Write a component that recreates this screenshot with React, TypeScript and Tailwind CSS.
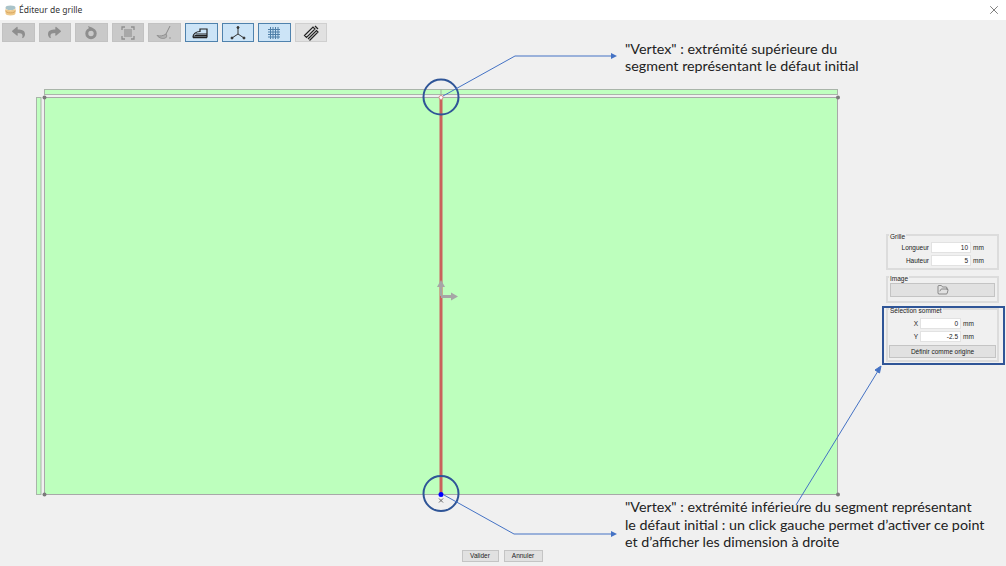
import React from "react";
import { X, FolderOpen } from "lucide-react";
import { FaReply, FaShare } from "react-icons/fa";

const uiFont = "font-['Liberation_Sans',sans-serif]";
const noteFont = "font-['Lato',sans-serif]";

const ToolButton = ({ active, disabled, children }: { active?: boolean; disabled?: boolean; children: React.ReactNode }) => {
  let look = "bg-[#e1e1e1] border-[#cfcfcf]";
  if (disabled) look = "bg-[#c9c9c9] border-[#c2c2c2]";
  if (active) look = "bg-[#cce4f7] border-[#4f82ad]";
  return <div className={`w-[32.6px] h-[19px] border flex items-center justify-center ${look}`}>{children}</div>;
};

const Field = ({ label, value, labelWidth, inputWidth }: { label: string; value: string; labelWidth: string; inputWidth: string }) => (
  <div className="flex items-center h-[11px]">
    <span className={`${labelWidth} text-right pr-[2px]`}>{label}</span>
    <div className={`${inputWidth} h-[11px] bg-white border border-[#e2e2e2] text-right pr-[2px] leading-[9px]`}>{value}</div>
    <span className="ml-[2px]">mm</span>
  </div>
);

const Group = ({ title, className, children }: { title: string; className: string; children: React.ReactNode }) => (
  <div className={`relative border-2 border-[#dcdcdc] ${className}`}>
    <span className="absolute left-[1px] top-[-4px] bg-[#f0f0f0] px-[1px] leading-[9px]">{title}</span>
    {children}
  </div>
);

const Canvas = () => (
  <svg className="w-[886px] h-[508px] block" viewBox="0 42 886 508">
    <rect x="44.5" y="89.5" width="793" height="5" fill="#bfffbf" stroke="#a9b5a9" />
    <rect x="36.5" y="97.5" width="4.5" height="397" fill="#bfffbf" stroke="#a9b5a9" />
    <rect x="44.5" y="97.5" width="793" height="397" fill="#bdffbd" stroke="#a8a8a8" />
    <line x1="441" y1="89" x2="441" y2="97" stroke="#9fb09f" />
    <line x1="441" y1="97" x2="441" y2="494" stroke="#c9625c" strokeWidth="3" />
    <g fill="#a6a6a6">
      <rect x="440" y="286" width="2" height="10" />
      <polygon points="441,280 437,287 445,287" />
      <rect x="441" y="295" width="11" height="3" />
      <polygon points="458,296.5 451,292.5 451,300.5" />
    </g>
    <g fill="#7a7a7a">
      <circle cx="44.5" cy="97.5" r="2" />
      <circle cx="838" cy="97.5" r="2" />
      <circle cx="44.5" cy="494.5" r="2" />
      <circle cx="838" cy="494.5" r="2" />
    </g>
    <circle cx="441" cy="97.5" r="2" fill="#fff" stroke="#d58f8f" />
    <circle cx="441" cy="494.5" r="2.5" fill="#0000ff" />
    <path d="M439 498.5l4 4M443 498.5l-4 4" stroke="#666" fill="none" />
  </svg>
);

export default function App() {
  return (
    <div className={`relative w-[1006px] h-[566px] overflow-hidden bg-[#f0f0f0] flex flex-col text-[6.5px] text-[#222] ${uiFont}`}>
      {/* Title bar */}
      <div className="h-[20px] bg-white flex items-center pl-[5px] pr-[5px] shrink-0">
        <svg width="11" height="11" viewBox="0 0 11 11">
          <ellipse cx="5.5" cy="2.8" rx="5" ry="2.3" fill="#a9c3c9" />
          <path d="M.5 3v5.2c0 1.3 2.2 2.3 5 2.3s5-1 5-2.3V3c0 1.3-2.2 2.3-5 2.3S.5 4.3.5 3z" fill="#efc98a" />
          <path d="M.5 5.6c0 1.3 2.2 2.3 5 2.3s5-1 5-2.3" stroke="#d9a55e" fill="none" />
        </svg>
        <span className="ml-[3px] text-[8.5px] text-[#333] font-['Noto_Sans',sans-serif]">Éditeur de grille</span>
        <X className="ml-auto" size={14} strokeWidth={1} color="#222" />
      </div>

      {/* Toolbar */}
      <div className="h-[22px] pt-[3px] pl-[2px] flex gap-[4px] shrink-0">
        <ToolButton disabled><FaReply size={13} color="#8e8e8e" /></ToolButton>
        <ToolButton disabled><FaShare size={13} color="#8e8e8e" /></ToolButton>
        <ToolButton disabled>
          <svg width="14" height="14" viewBox="0 0 14 14" fill="none">
            <circle cx="7" cy="7.5" r="4.2" stroke="#8e8e8e" strokeWidth="3" />
            <path d="M4 0l5 2-3 3z" fill="#8e8e8e" />
          </svg>
        </ToolButton>
        <ToolButton disabled>
          <svg width="14" height="14" viewBox="0 0 14 14" fill="none">
            <rect x="3" y="3" width="8" height="8" fill="#a8a8a8" />
            <path d="M1 4V1h3M10 1h3v3M13 10v3h-3M4 13H1v-3" stroke="#8e8e8e" strokeWidth="1.3" />
          </svg>
        </ToolButton>
        <ToolButton disabled>
          <svg width="20" height="16" viewBox="0 0 20 16" fill="none">
            <path d="M15 1l-4 8" stroke="#8a8a8a" />
            <path d="M2 10.500c3 .8 6 .5 9-1.500 1 1.500 1 3-.5 4-2.500 1-6 .5-8.500-2.500z" fill="#b0b0b0" stroke="#858585" strokeWidth=".8" />
            <circle cx="15" cy="13" r=".7" fill="#858585" />
          </svg>
        </ToolButton>
        <ToolButton active>
          <svg width="18" height="12" viewBox="0 0 18 12" fill="none">
            <path d="M1 10c0-3 3-5.500 7-5.500V2h7v8z" fill="#cce4f7" stroke="#222" strokeWidth="1.2" />
            <path d="M2.500 8.500H15M3.500 7H15" stroke="#222" />
            <path d="M1 10.500h14" stroke="#222" strokeWidth="1.5" />
          </svg>
        </ToolButton>
        <ToolButton active>
          <svg width="16" height="14" viewBox="0 0 16 14" fill="none" stroke="#333">
            <path d="M8 1.500V8L2 12M8 8l6 4" />
            <circle cx="8" cy="1.500" r="1" fill="#333" />
            <circle cx="2" cy="12" r="1" fill="#333" />
            <circle cx="14" cy="12" r="1" fill="#333" />
          </svg>
        </ToolButton>
        <ToolButton active>
          <svg width="14" height="14" viewBox="0 0 14 14" fill="none" stroke="#4f7fa8">
            <path d="M3.500 1v12M6 1v12M8.500 1v12M11 1v12M1 3.500h12M1 6h12M1 8.500h12M1 11h12" />
          </svg>
        </ToolButton>
        <ToolButton>
          <svg width="16" height="16" viewBox="0 0 16 16" fill="none" stroke="#222" strokeWidth="1.200">
            <path d="M1.500 10.500L10 2l2 2-8.500 8.500zM5 14l8.500-8.500 1.500 1.500-8.500 8.500" />
            <path d="M12 1l3 3" />
          </svg>
        </ToolButton>
      </div>

      {/* Main */}
      <div className="flex h-[508px] shrink-0">
        <Canvas />
        <div className="w-[113px] flex flex-col pt-[192px]">
          <Group title="Grille" className="h-[36px] pt-[6px] flex flex-col gap-[2px]">
            <Field label="Longueur" value="10" labelWidth="w-[43px]" inputWidth="w-[40px]" />
            <Field label="Hauteur" value="5" labelWidth="w-[43px]" inputWidth="w-[40px]" />
          </Group>
          <Group title="Image" className="mt-[6px] h-[27px] pt-[5px] px-[2px]">
            <div className="h-[14px] bg-[#e1e1e1] border border-[#c4c4c4] flex items-center justify-center">
              <FolderOpen size={12} strokeWidth={1} color="#333" />
            </div>
          </Group>
          <Group title="Sélection sommet" className="mt-[5px] h-[54px] pt-[8px] flex flex-col gap-[2px]">
            <Field label="X" value="0" labelWidth="w-[32px]" inputWidth="w-[41px]" />
            <Field label="Y" value="-2.5" labelWidth="w-[32px]" inputWidth="w-[41px]" />
            <div className="mx-[1px] mt-[1px] h-[13px] bg-[#e1e1e1] border border-[#c4c4c4] flex items-center justify-center">
              Définir comme origine
            </div>
          </Group>
        </div>
      </div>

      {/* Footer buttons */}
      <div className="flex justify-center gap-[5px] pr-[2px]">
        <div className="w-[37px] h-[12px] bg-[#e1e1e1] border border-[#c4c4c4] flex items-center justify-center">Valider</div>
        <div className="w-[39px] h-[12px] bg-[#e1e1e1] border border-[#c4c4c4] flex items-center justify-center">Annuler</div>
      </div>

      {/* Annotations laid over the editor */}
      <svg className="absolute inset-0 pointer-events-none" width="1006" height="566" fill="none">
        <circle cx="441" cy="97" r="17.500" stroke="#2f5597" strokeWidth="2" />
        <circle cx="441" cy="493.500" r="17.500" stroke="#2f5597" strokeWidth="2" />
        <path d="M443 96L515 56H611" stroke="#4472c4" />
        <path d="M611 53l6 3-6 3z" fill="#4472c4" />
        <path d="M444 495L514 534H611" stroke="#4472c4" />
        <path d="M611 531l6 3-6 3z" fill="#4472c4" />
        <path d="M796 505L878 371" stroke="#4472c4" />
        <path d="M881 366l-6 4 4.500 3z" fill="#4472c4" stroke="#4472c4" />
      </svg>
      <div className="absolute left-[882px] top-[306px] w-[123px] h-[59px] border-2 border-[#2f5597]" />
      <div className={`absolute left-[625px] top-[40px] text-[14.3px] leading-[17px] text-[#222] ${noteFont}`}>
        "Vertex" : extrémité supérieure du<br />segment représentant le défaut initial
      </div>
      <div className={`absolute left-[625px] top-[498px] text-[14.3px] leading-[17.500px] text-[#222] ${noteFont}`}>
        "Vertex" : extrémité inférieure du segment représentant<br />
        le défaut initial : un click gauche permet d’activer ce point<br />
        et d’afficher les dimension à droite
      </div>
    </div>
  );
}
